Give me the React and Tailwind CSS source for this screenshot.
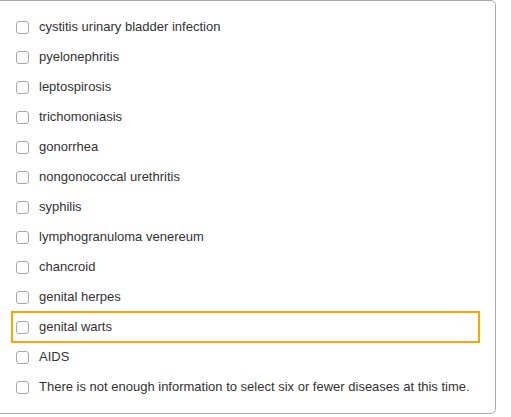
const diseases = [
  "cystitis urinary bladder infection",
  "pyelonephritis",
  "leptospirosis",
  "trichomoniasis",
  "gonorrhea",
  "nongonococcal urethritis",
  "syphilis",
  "lymphogranuloma venereum",
  "chancroid",
  "genital herpes",
  "genital warts",
  "AIDS",
  "There is not enough information to select six or fewer diseases at this time.",
];

const App = () => {
  return (
    <div className="min-h-[417px] w-[511px] bg-white font-['Liberation_Sans',Arial,sans-serif] text-[13px] text-[#333]">
      <div className="ml-[-5px] w-[501px] h-[414px] rounded-[5px] border border-[#aaa] bg-white pt-[12px] pl-[17px] pr-[17px]">
        <div className="flex flex-col gap-[2px]">
          {diseases.map((d) => (
            <label
              key={d}
              className={
                "flex h-[28px] items-center pl-[3px] " +
                (d === "genital warts" ? "outline-2 outline-[#ffa500]" : "")
              }
            >
              <span className="h-[13px] w-[13px] shrink-0 rounded-[3px] border border-[#a8a8a8] bg-white" />
              <span className="ml-[10px] whitespace-nowrap">{d}</span>
            </label>
          ))}
        </div>
      </div>
    </div>
  );
};

export default App;
